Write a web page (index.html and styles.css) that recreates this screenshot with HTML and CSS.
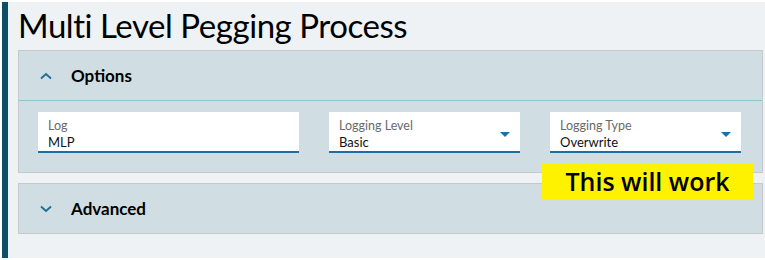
FILE: index.html
```html
<!DOCTYPE html>
<html lang="en">
<head>
  <meta charset="UTF-8">
  <title>Multi Level Pegging Process</title>
  <link rel="stylesheet" href="styles.css">
</head>
<body>
  <div class="app">
    <h1 class="title">Multi Level Pegging Process</h1>

    <div class="panel">
      <div class="panel-head">
        <svg class="chev" width="12" height="8" viewBox="0 0 12 8"><path d="M1 6.5 L6 2 L11 6.5" fill="none" stroke="#1c6e9c" stroke-width="1.8"/></svg>
        <span>Options</span>
      </div>
      <div class="panel-body">
        <div class="field wide">
          <div class="field-label">Log</div>
          <div class="field-value">MLP</div>
        </div>
        <div class="field">
          <div class="field-label">Logging Level</div>
          <div class="field-value">Basic</div>
          <span class="caret"></span>
        </div>
        <div class="field">
          <div class="field-label">Logging Type</div>
          <div class="field-value">Overwrite</div>
          <span class="caret"></span>
        </div>
      </div>
    </div>

    <div class="panel closed">
      <div class="panel-head">
        <svg class="chev" width="12" height="8" viewBox="0 0 12 8"><path d="M1 1.5 L6 6 L11 1.5" fill="none" stroke="#1c6e9c" stroke-width="1.8"/></svg>
        <span>Advanced</span>
      </div>
    </div>

    <div class="note">This will work</div>
  </div>
</body>
</html>
```

FILE: styles.css
```css
body {
  margin: 0;
  background: #ffffff;
  font-family: Lato, "Noto Sans", sans-serif;
  color: #000;
}

.app {
  position: relative;
  margin: 2px 0 0 2px;
  height: 256px;
  border-left: 6px solid #0b5064;
  background: #eef2f5;
  padding: 0 2px 0 10px;
}

.title {
  margin: 0;
  padding-top: 3px;
  height: 45px;
  font-size: 33px;
  font-weight: 400;
  line-height: 40px;
  letter-spacing: -0.45px;
}

.panel {
  background: #d0dde2;
  border: 1px solid #c5c9cb;
}

.panel.closed {
  margin-top: 10px;
}

.panel-head {
  display: flex;
  align-items: center;
  height: 49px;
  padding-left: 21px;
  font-size: 17px;
  font-weight: 700;
}

.chev {
  margin-right: 19px;
}

.panel-body {
  display: flex;
  gap: 30px;
  border-top: 1px solid #8fc2d3;
  padding: 11px 19px 19px;
}

.field {
  position: relative;
  flex-shrink: 0;
  width: 181px;
  height: 39px;
  background: #fff;
  border-bottom: 2px solid #1a6fa6;
  padding-left: 10px;
}

.field.wide {
  width: 251px;
}

.field-label {
  padding-top: 6px;
  font-size: 12.5px;
  line-height: 16px;
  color: #6a6a6a;
}

.field-value {
  font-size: 13px;
  line-height: 16px;
  color: #111;
}

.caret {
  position: absolute;
  right: 10px;
  top: 20px;
  border-left: 5px solid transparent;
  border-right: 5px solid transparent;
  border-top: 5px solid #1a6fa6;
}

.note {
  position: absolute;
  left: 534px;
  top: 161px;
  width: 211px;
  height: 37px;
  background: #fff200;
  font-family: "Open Sans", sans-serif;
  font-weight: 600;
  font-size: 25px;
  line-height: 37px;
  text-align: center;
}
```
